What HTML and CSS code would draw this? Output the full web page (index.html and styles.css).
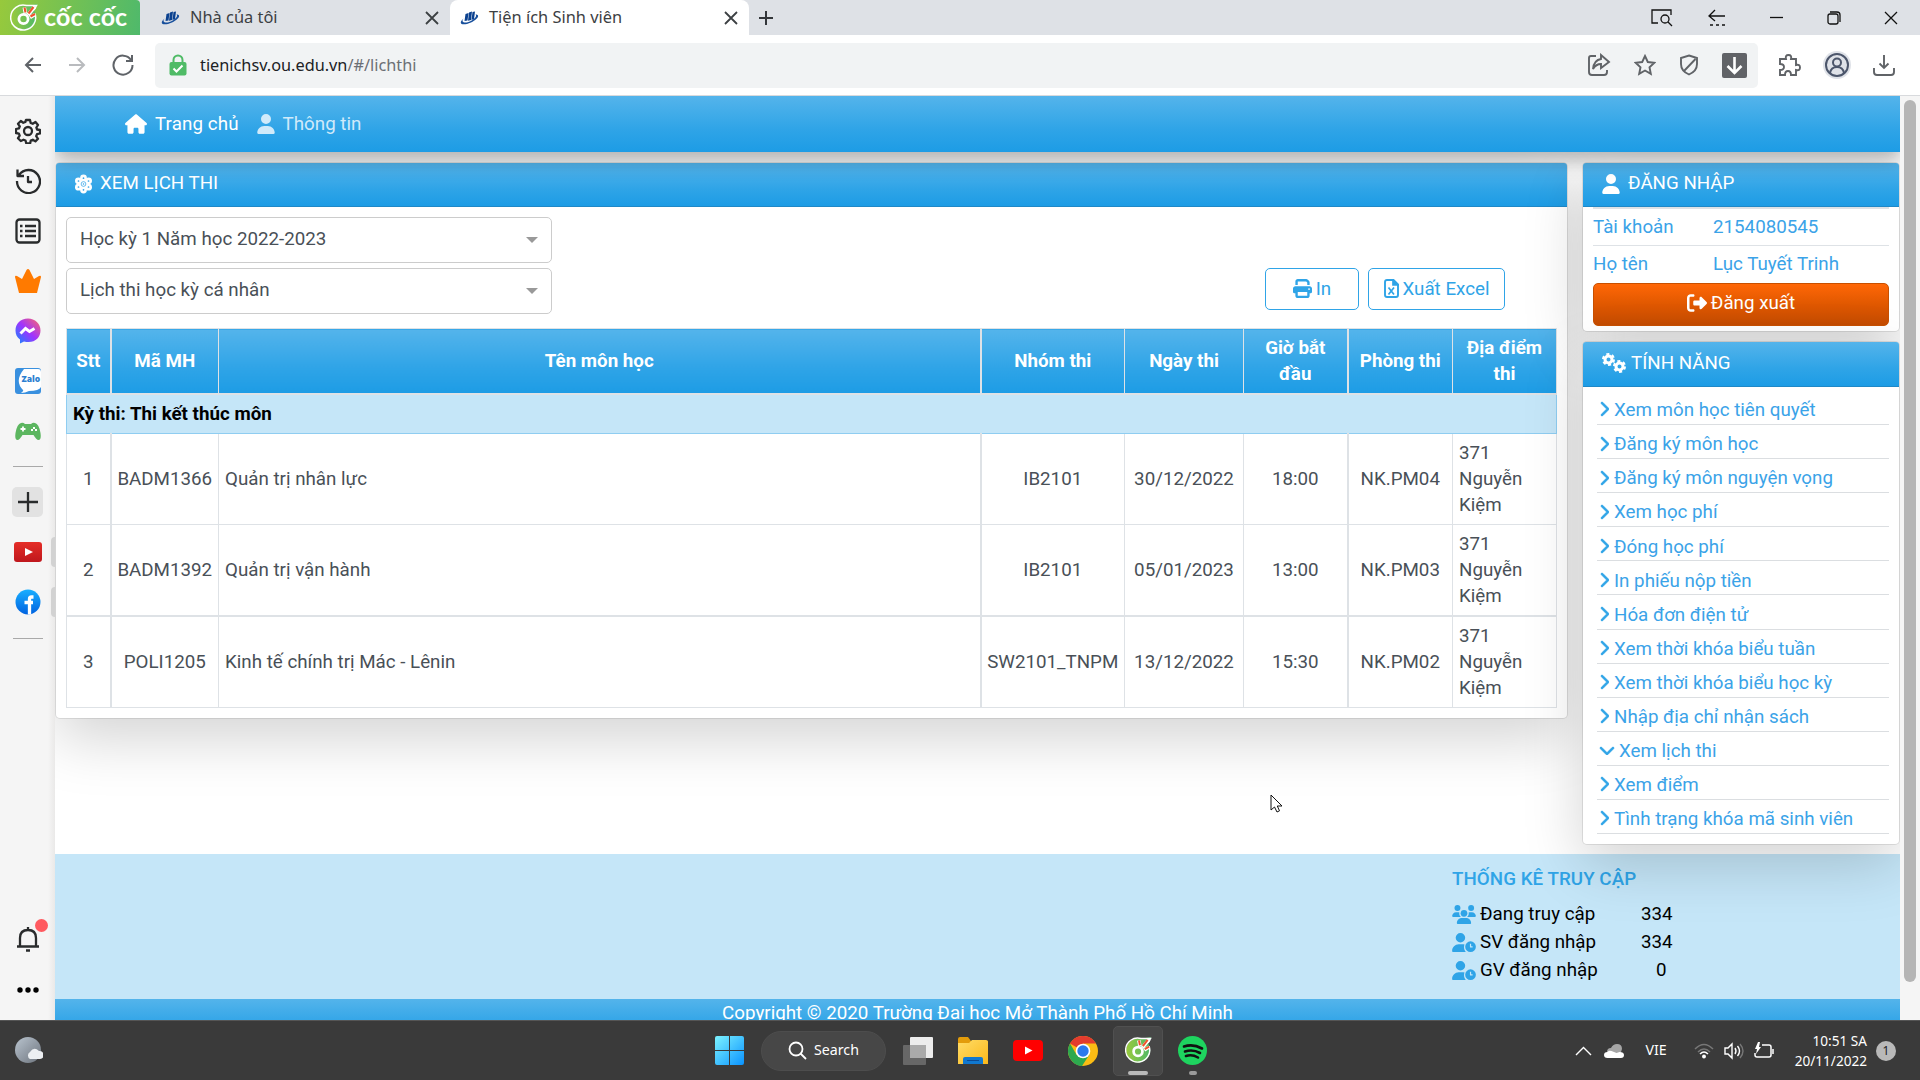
FILE: index.html
```html
<!DOCTYPE html>
<html lang="vi">
<head>
    <meta charset="utf-8" />
    <title>Tiện ích Sinh viên</title>
    <link rel="stylesheet" href="styles.css">
</head>

<body>
    <!-- shared icons -->
    <svg class="defs" width="0" height="0">
        <defs>
            <linearGradient id="gMes" x1="0" y1="1" x2="1" y2="0">
                <stop offset="0" stop-color="#0a8cff" />
                <stop offset=".5" stop-color="#a033ff" />
                <stop offset="1" stop-color="#ff6968" />
            </linearGradient>
            <linearGradient id="gFb" x1="0" y1="0" x2="0" y2="1">
                <stop offset="0" stop-color="#19afff" />
                <stop offset="1" stop-color="#0062e0" />
            </linearGradient>
            <linearGradient id="gYt" x1="0" y1="0" x2="0" y2="1">
                <stop offset="0" stop-color="#e52d27" />
                <stop offset="1" stop-color="#bf171d" />
            </linearGradient>
            <linearGradient id="gWin" x1="0" y1="0" x2="1" y2="1">
                <stop offset="0" stop-color="#7df3ff" />
                <stop offset="1" stop-color="#0a93ff" />
            </linearGradient>
            <linearGradient id="gFolder" x1="0" y1="0" x2="1" y2="1">
                <stop offset="0" stop-color="#ffdc67" />
                <stop offset="1" stop-color="#fbb81a" />
            </linearGradient>
            <linearGradient id="gMoon" x1="0" y1="0" x2="1" y2="1">
                <stop offset="0" stop-color="#b9c4cf" />
                <stop offset="1" stop-color="#6d747d" />
            </linearGradient>
            <linearGradient id="gCoc" x1="0" y1="0" x2="1" y2="0">
                <stop offset="0" stop-color="#9aca3c" />
                <stop offset="1" stop-color="#4cb86a" />
            </linearGradient>
        </defs>
        <symbol id="chevron" viewBox="0 0 320 512">
            <path d="M310.6 233.4c12.5 12.5 12.5 32.8 0 45.3l-192 192c-12.5 12.5-32.8 12.5-45.3 0s-12.5-32.8 0-45.3L242.7 256 73.4 86.6c-12.5-12.5-12.5-32.8 0-45.3s32.8-12.5 45.3 0l192 192z" />
        </symbol>
        <symbol id="user" viewBox="0 0 448 512">
            <path d="M224 256A128 128 0 1 0 224 0a128 128 0 1 0 0 256zm-45.7 48C79.8 304 0 383.8 0 482.3C0 498.7 13.3 512 29.7 512H418.3c16.4 0 29.7-13.3 29.7-29.7C448 383.8 368.2 304 269.7 304H178.3z" />
        </symbol>
        <symbol id="user-clock" viewBox="0 0 640 512">
            <path d="M224 256A128 128 0 1 0 224 0a128 128 0 1 0 0 256zm-45.700 48C79.800 304 0 383.800 0 482.300C0 498.700 13.300 512 29.700 512H370c-32-36-50-80-50-128c0-26 5-50 14-73c-20-5-42-7-64-7z" />
            <path fill-rule="evenodd" d="M496 224a144 144 0 1 1 0 288a144 144 0 1 1 0-288zM480 288v88c0 8 7 16 16 16h56v-32h-40v-72z" />
        </symbol>
        <symbol id="users" viewBox="0 0 640 512">
            <circle cx="144" cy="80" r="80" />
            <circle cx="512" cy="80" r="80" />
            <circle cx="320" cy="224" r="90" />
            <path d="M0 299c0-59 48-107 107-107h43c16 0 31 3 45 10c-9 44 3 88 41 118H21c-12 0-21-9-21-21zM640 299c0-59-48-107-107-107h-43c-16 0-31 3-45 10c9 44-3 88-41 118h215c12 0 21-9 21-21zM128 485c0-73 60-133 133-133h118c73 0 133 60 133 133c0 15-12 27-27 27H155c-15 0-27-12-27-27z" />
        </symbol>
        <symbol id="favicon" viewBox="0 0 20 20">
            <path d="M6.500 6l3-1-1 7.500-3 .5zM10 4.500l3-1-1 8.500-3 .7zM13.500 4l2.500-.5-1 7.500-2.500 1z" fill="#0b418f" />
            <path d="M4.500 10.500C-1.500 15.500 3 18.500 12 14.500c7-3.500 9.500-8 4.500-8C19.500 9 10 15 5.500 14.500C3 14 3 12.500 4.500 10.500z" fill="#174f9c" />
        </symbol>
        <symbol id="coc" viewBox="0 0 28 28">
            <path d="M25.500 10A12.500 12.500 0 1 1 17 1.900L27 0l-3 6z" fill="url(#gCoc)" />
            <path d="M25 9.500A12.500 12.500 0 1 1 16.500 1.500H26.500L24 6" fill="none" stroke="#fff" stroke-width="1.500" />
            <circle cx="13.500" cy="15" r="4.600" fill="none" stroke="#fff" stroke-width="2.800" />
            <path d="M15.500 9.500l-1.200-6M18 11L25 2.500M20 13.500l5-3" stroke="#fff" stroke-width="3.600" />
            <path d="M15.500 8.500l-1-5M18.500 9.500l5-6.500M20.500 12.500l4.500-2.500" stroke="#f0532d" stroke-width="2.100" />
        </symbol>
    </svg>

    <div class="tab-bar">
        <div class="logo">
            <svg width="28" height="28"><use href="#coc" /></svg>
            <span>cốc cốc</span>
        </div>
        <div class="tab">
            <svg width="20" height="20"><use href="#favicon" /></svg>
            <span>Nhà của tôi</span>
            <svg class="close" width="14" height="14" viewBox="0 0 14 14"><path d="M1 1l12 12M13 1L1 13" /></svg>
        </div>
        <div class="tab tab-active">
            <svg width="20" height="20"><use href="#favicon" /></svg>
            <span>Tiện ích Sinh viên</span>
            <svg class="close" width="14" height="14" viewBox="0 0 14 14"><path d="M1 1l12 12M13 1L1 13" /></svg>
        </div>
        <svg class="plus line" width="16" height="16" viewBox="0 0 16 16"><path d="M8 1v14M1 8h14" /></svg>

        <div class="window-buttons">
            <svg class="line thin" width="24" height="20" viewBox="0 0 24 20"><path d="M8 15H2V2h19v5" /><circle cx="15" cy="11" r="4" /><path d="M18 14l4 4" /></svg>
            <svg class="line thin" width="20" height="20" viewBox="0 0 20 20"><path d="M18 8H3M8 2L2 8l6 5" /><path d="M3 17h16" stroke-dasharray="3 3" /></svg>
            <svg class="line thin" width="14" height="14" viewBox="0 0 14 14"><path d="M0 6.500h13" /></svg>
            <svg class="line thin" width="14" height="14" viewBox="0 0 14 14"><rect x="1" y="3" width="10" height="10" rx="2" /><path d="M3 1h7q3 0 3 3v7" /></svg>
            <svg class="line thin" width="14" height="14" viewBox="0 0 14 14"><path d="M1 1l12 12M13 1L1 13" /></svg>
        </div>
    </div>

    <div class="toolbar">
        <svg class="line grey" width="18" height="18" viewBox="0 0 18 18"><path d="M17 9H2M9 2L2 9l7 7" /></svg>
        <svg class="line light" width="18" height="18" viewBox="0 0 18 18"><path d="M1 9h15M9 2l7 7-7 7" /></svg>
        <svg class="line grey" width="22" height="22" viewBox="0 0 22 22"><path d="M19 6A9.500 9.500 0 1 0 20.500 11M20 1v6h-6" /></svg>

        <div class="address">
            <svg width="18" height="22" viewBox="0 0 18 22">
                <path d="M4.500 9V6a4.500 4.500 0 0 1 9 0v3" fill="none" stroke="#4fbb66" stroke-width="2" />
                <rect x="0.500" y="8" width="17" height="13.500" rx="2" fill="#4fbb66" />
                <path d="M4.500 14.500l3 3 6-6" fill="none" stroke="#fff" stroke-width="2" />
            </svg>
            <p class="url">tienichsv.ou.edu.vn<span>/#/lichthi</span></p>
            <div class="address-icons">
                <svg class="line soft" width="24" height="24" viewBox="0 0 24 24"><path d="M9 3H4q-2 0-2 2v14q0 3 3 3h12q3 0 3-3v-2M14 6V2l8 7-8 6v-4q-5 0-8 5 1-9 8-10z" /></svg>
                <svg class="line soft" width="22" height="22" viewBox="0 0 22 22"><path d="M11 2l2.800 6 6.500.8-4.800 4.500 1.300 6.500L11 16.500 5.200 19.800l1.300-6.500L1.700 8.800l6.500-.8z" /></svg>
                <svg class="line soft" width="20" height="22" viewBox="0 0 20 22"><path d="M10 1.500l8 2.500v6q0 7-8 10.500Q2 17 2 10V4zM16.500 5L5 17" /></svg>
                <svg width="25" height="25" viewBox="0 0 25 25"><rect width="25" height="25" rx="2" fill="#616367" /><path d="M12.500 4v15M5.500 13l7 7 7-7" fill="none" stroke="#fff" stroke-width="2.600" /></svg>
            </div>
        </div>
        <div class="tool-icons">
            <svg class="line soft" width="24" height="24" viewBox="0 0 24 24"><path d="M2 6h6q-1-4 2.500-4T13 6h5v6q4-1 4 2.500T18 17v5h-5q0-4-3-4t-3 4H2v-5q4 0 4-3t-4-3z" /></svg>
            <svg width="28" height="28" viewBox="0 0 28 28"><circle cx="14" cy="14" r="14" fill="#dfe2e8" /><g fill="none" stroke="#4c566b" stroke-width="2"><circle cx="14" cy="14" r="11" /><circle cx="14" cy="11.500" r="4" /><path d="M7 22q1-6 7-6t7 6" /></g></svg>
            <svg class="line soft" width="24" height="22" viewBox="0 0 24 22"><path d="M12 1v13M7.500 9.500L12 14l4.500-4.500M2 14v4q0 3 3 3h14q3 0 3-3v-4" /></svg>
        </div>
    </div>

    <div class="main">
        <div class="side-rail">
            <svg class="line dark" width="26" height="26" viewBox="0 0 26 26"><path d="M11 2h4l.7 3 2 .8L20.500 4l2.500 3-1.600 2.500.7 2 2.900.5v3.500l-3 .7-.8 2 1.800 2.600-2.600 2.600-2.600-1.700-2 .9-.7 2.900h-3.800l-.8-3-2-.8L5.800 23 3 20.200l1.700-2.600-.8-2L1 15v-4l3-.7.8-2L3 5.800 5.800 3l2.500 1.800 2-.8z" /><circle cx="13" cy="13" r="4" /></svg>
            <svg class="line dark" width="26" height="26" viewBox="0 0 26 26"><path d="M4 7a11.500 11.500 0 1 1-2 6M2.500 1.500V8H9M13 8v6h4" /></svg>
            <svg class="line dark" width="26" height="26" viewBox="0 0 26 26"><rect x="1.500" y="1.500" width="23" height="23" rx="3" /><path d="M10 8h11M10 13h11M10 18h11M5 8h2.500M5 13h2.500M5 18h2.500" /></svg>
            <svg width="28" height="26" viewBox="0 0 28 26"><path d="M1 9q0-2 2-1l5 3 4.500-9q1.500-2 3 0l4.500 9 5-3q2-1 2 1l-4 16H5z" fill="#ff7a00" /></svg>
            <svg width="26" height="26" viewBox="0 0 26 26"><path d="M13 .5C5.500.5.500 5.500.5 12.500c0 4 1.500 7 4.500 9V25.500l4-2c10 2.500 16.500-3.500 16.500-11C25.500 5.500 20 .5 13 .5z" fill="url(#gMes)" /><path d="M5.500 15.500l5-5 4 3 5-3" fill="none" stroke="#fff" stroke-width="3" /></svg>
            <svg width="26" height="26" viewBox="0 0 26 26"><rect width="26" height="26" rx="3" fill="#3990df" /><path d="M9 1h14q3 0 3 3v15q-2 4-12 4-4 2-8 2 3-2 2-3-9-9 1-21z" fill="#fff" /><text x="6.500" y="14" class="zalo">Zalo</text></svg>
            <svg width="26" height="18" viewBox="0 0 26 18"><path d="M6 1q2-1 4 1h6q2-2 4-1 4 1 5.500 10 1 7-2 7-2 0-5-5h-11q-3 5-5 5-3 0-2-7Q2 2 6 1z" fill="#5cb660" /><path d="M8 4.500v5M5.500 7h5" stroke="#fff" stroke-width="1.800" /><path d="M18 5h2v2h-2zM16 7h2v2h-2zM20 7h2v2h-2z" fill="#fff" /></svg>
            <hr />
            <div class="add-box"><svg class="line dark" width="20" height="20" viewBox="0 0 20 20"><path d="M10 0v20M0 10h20" /></svg></div>
            <svg width="28" height="20" viewBox="0 0 28 20"><rect width="28" height="20" rx="3" fill="url(#gYt)" /><path d="M11 6l8 4-8 4z" fill="#fff" /></svg>
            <svg width="26" height="26" viewBox="0 0 26 26"><circle cx="13" cy="13" r="12.500" fill="url(#gFb)" /><path d="M18.500 8h-2q-2 0-2 2v15.500M9.500 13.500h8.500" fill="none" stroke="#fff" stroke-width="3.300" /></svg>
            <hr />
            <div class="rail-bottom">
                <svg class="line dark" width="24" height="26" viewBox="0 0 24 26"><path d="M4 20v-8q0-8 8-8t8 8v8M1 20.500h22M12 4V1M10 24.500h4" /></svg>
                <i class="alert-dot"></i>
                <svg width="22" height="6" viewBox="0 0 22 6"><circle cx="3" cy="3" r="2.700" /><circle cx="11" cy="3" r="2.700" /><circle cx="19" cy="3" r="2.700" /></svg>
            </div>
            <i class="handle handle-yt"></i>
            <i class="handle handle-fb"></i>
        </div>

        <div class="page">
            <div class="navbar">
                <a class="active">
                    <svg width="22" height="20" viewBox="0 0 576 512"><path d="M575.8 255.500c0 18-15 32.100-32 32.100h-32l.7 160.200V472c0 22.100-17.900 40-40 40H392c-22.100 0-40-17.900-40-40v-88c0-17.700-14.300-32-32-32h-64c-17.700 0-32 14.300-32 32v88c0 22.100-17.900 40-40 40h-80c-22.100 0-40-17.900-40-40V287.600H32c-18 0-32-14-32-32.100c0-9 3-17 10-24L266.400 8c7-7 15-8 22-8s15 2 21 7L564.800 231.500c8 7 12 15 11 24z" /></svg>
                    Trang chủ
                </a>
                <a><svg width="18" height="20"><use href="#user" /></svg>Thông tin</a>
            </div>

            <div class="content">
                <div class="card schedule">
                    <h2>
                        <svg width="17" height="20" viewBox="0 0 18 20"><g><circle cx="9" cy="3.600" r="3.600" /><circle cx="14.400" cy="6.600" r="3.600" /><circle cx="14.400" cy="13.400" r="3.600" /><circle cx="9" cy="16.400" r="3.600" /><circle cx="3.600" cy="13.400" r="3.600" /><circle cx="3.600" cy="6.600" r="3.600" /><circle cx="9" cy="10" r="4" /></g><circle cx="9" cy="10" r="2.500" fill="none" stroke="#35a5e9" stroke-width=".8" /><g fill="#35a5e9"><circle cx="9" cy="10" r=".8" /><circle cx="9" cy="3.800" r=".9" /><circle cx="14.300" cy="6.800" r=".9" /><circle cx="14.300" cy="13.200" r=".9" /><circle cx="9" cy="16.200" r=".9" /><circle cx="3.700" cy="13.200" r=".9" /><circle cx="3.700" cy="6.800" r=".9" /></g></svg>
                        XEM LỊCH THI
                    </h2>
                    <div class="filters">
                        <div class="selects">
                            <div class="select">Học kỳ 1 Năm học 2022-2023</div>
                            <div class="select">Lịch thi học kỳ cá nhân</div>
                        </div>
                        <div class="buttons">
                            <button class="btn-print">
                                <svg width="19" height="19" viewBox="0 0 512 512"><path d="M128 0C92.700 0 64 28.700 64 64v96h64V64H354.700L384 93.300V160h64V93.300c0-17-6.700-33.300-18.700-45.300L400 18.700C388 6.700 371.700 0 354.700 0H128zM384 352v96H128v-96H384zm64 32h32c17.700 0 32-14.300 32-32V256c0-35.300-28.700-64-64-64H64c-35.300 0-64 28.700-64 64v96c0 17.700 14.300 32 32 32H64v64c0 35.300 28.700 64 64 64H384c35.300 0 64-28.700 64-64V384zM432 248a24 24 0 1 1 0 48 24 24 0 1 1 0-48z" /></svg>
                                In
                            </button>
                            <button class="btn-excel">
                                <svg width="15" height="19" viewBox="0 0 15 19"><path d="M3 1h6.500L14 5.500V16q0 2-2 2H3q-2 0-2-2V3q0-2 2-2z" fill="none" stroke="#2fa4e7" stroke-width="1.900" /><path d="M9 1v5h5zM4.500 8.500l5.500 7M10 8.500l-5.500 7" stroke="#2fa4e7" stroke-width="1.700" /></svg>
                                Xuất Excel
                            </button>
                        </div>
                    </div>
                    <table>
                        <colgroup>
                            <col class="c-stt"><col class="c-code"><col><col class="c-group">
                            <col class="c-date"><col class="c-time"><col class="c-room"><col class="c-place">
                        </colgroup>
                        <tr>
                            <th>Stt</th><th>Mã MH</th><th>Tên môn học</th><th>Nhóm thi</th>
                            <th>Ngày thi</th><th>Giờ bắt đầu</th><th>Phòng thi</th><th>Địa điểm thi</th>
                        </tr>
                        <tr class="group"><td colspan="8">Kỳ thi: Thi kết thúc môn</td></tr>
                        <tr>
                            <td>1</td><td>BADM1366</td><td class="left">Quản trị nhân lực</td><td>IB2101</td>
                            <td>30/12/2022</td><td>18:00</td><td>NK.PM04</td><td class="left">371 Nguyễn Kiệm</td>
                        </tr>
                        <tr>
                            <td>2</td><td>BADM1392</td><td class="left">Quản trị vận hành</td><td>IB2101</td>
                            <td>05/01/2023</td><td>13:00</td><td>NK.PM03</td><td class="left">371 Nguyễn Kiệm</td>
                        </tr>
                        <tr>
                            <td>3</td><td>POLI1205</td><td class="left">Kinh tế chính trị Mác - Lênin</td><td>SW2101_TNPM</td>
                            <td>13/12/2022</td><td>15:30</td><td>NK.PM02</td><td class="left">371 Nguyễn Kiệm</td>
                        </tr>
                    </table>
                </div>

                <div class="right-col">
                    <div class="card login">
                        <h2><svg width="18" height="20"><use href="#user" /></svg>ĐĂNG NHẬP</h2>
                        <div class="account">
                            <p><span>Tài khoản</span>2154080545</p>
                            <p><span>Họ tên</span>Lục Tuyết Trinh</p>
                            <button class="btn-logout">
                                <svg width="20" height="20" viewBox="0 0 512 512"><path d="M377.900 105.900L500.700 228.700c7.200 7.200 11.300 17.100 11.300 27.300s-4.100 20.100-11.300 27.300L377.900 406.100c-6.400 6.400-15 9.900-24 9.900c-18.700 0-33.900-15.200-33.900-33.900l0-62.100-128 0c-17.700 0-32-14.300-32-32l0-64c0-17.700 14.300-32 32-32l128 0 0-62.100c0-18.700 15.200-33.900 33.900-33.900c9 0 17.600 3.600 24 9.900zM160 96L96 96c-17.700 0-32 14.300-32 32l0 256c0 17.700 14.300 32 32 32l64 0c17.700 0 32 14.300 32 32s-14.300 32-32 32l-64 0c-53 0-96-43-96-96L0 128C0 75 43 32 96 32l64 0c17.700 0 32 14.300 32 32s-14.300 32-32 32z" /></svg>
                                Đăng xuất
                            </button>
                        </div>
                    </div>

                    <div class="card features">
                        <h2>
                            <svg width="24" height="20" viewBox="0 0 24 20"><g fill="none" stroke="#fff"><circle cx="6.500" cy="6.500" r="3.500" stroke-width="3" /><circle cx="6.500" cy="6.500" r="5.400" stroke-width="2.200" stroke-dasharray="3 2.650" /><circle cx="17.500" cy="13.500" r="3.500" stroke-width="3" /><circle cx="17.500" cy="13.500" r="5.400" stroke-width="2.200" stroke-dasharray="3 2.650" /></g></svg>
                            TÍNH NĂNG
                        </h2>
                        <ul>
                            <li><svg><use href="#chevron" /></svg>Xem môn học tiên quyết</li>
                            <li><svg><use href="#chevron" /></svg>Đăng ký môn học</li>
                            <li><svg><use href="#chevron" /></svg>Đăng ký môn nguyện vọng</li>
                            <li><svg><use href="#chevron" /></svg>Xem học phí</li>
                            <li><svg><use href="#chevron" /></svg>Đóng học phí</li>
                            <li><svg><use href="#chevron" /></svg>In phiếu nộp tiền</li>
                            <li><svg><use href="#chevron" /></svg>Hóa đơn điện tử</li>
                            <li><svg><use href="#chevron" /></svg>Xem thời khóa biểu tuần</li>
                            <li><svg><use href="#chevron" /></svg>Xem thời khóa biểu học kỳ</li>
                            <li><svg><use href="#chevron" /></svg>Nhập địa chỉ nhận sách</li>
                            <li class="open"><svg><use href="#chevron" /></svg>Xem lịch thi</li>
                            <li><svg><use href="#chevron" /></svg>Xem điểm</li>
                            <li><svg><use href="#chevron" /></svg>Tình trạng khóa mã sinh viên</li>
                        </ul>
                    </div>
                </div>
            </div>

            <div class="footer">
                <h3>THỐNG KÊ TRUY CẬP</h3>
                <p><svg><use href="#users" /></svg><span>Đang truy cập</span><b>334</b></p>
                <p><svg><use href="#user-clock" /></svg><span>SV đăng nhập</span><b>334</b></p>
                <p><svg><use href="#user-clock" /></svg><span>GV đăng nhập</span><b class="zero">0</b></p>
            </div>
            <div class="copyright">Copyright © 2020 Trường Đại học Mở Thành Phố Hồ Chí Minh</div>
        </div>

        <div class="scrollbar"><div class="thumb"></div></div>
    </div>

    <div class="taskbar">
        <svg class="weather" width="28" height="27" viewBox="0 0 28 27"><circle cx="13" cy="13" r="13" fill="url(#gMoon)" /><path d="M15 22a4 4 0 0 1 0-7q4-6 9-1a4 4 0 0 1 1 8z" fill="#eceff2" /></svg>
        <div class="apps">
            <svg width="30" height="30" viewBox="0 0 30 30" fill="url(#gWin)"><path d="M0 2q0-2 2-2h12v14H0zM15 0h12q2 0 2 2v12H15zM0 15h14v14H2q-2 0-2-2zM15 15h14v12q0 2-2 2H15z" /></svg>
            <div class="search">
                <svg width="19" height="19" viewBox="0 0 19 19"><circle cx="8" cy="8" r="6.500" /><path d="M12.500 12.500l5.500 5.500" /></svg>
                Search
            </div>
            <svg width="30" height="28" viewBox="0 0 30 28"><rect x="7" width="23" height="21" rx="1" fill="#ededed" /><rect y="8" width="23" height="20" rx="1" fill="#777" opacity=".75" /><path d="M7 8h16v13H7z" fill="#aaa" /></svg>
            <svg width="30" height="28" viewBox="0 0 30 28"><path d="M0 2q0-2 2-2h8l3 4h17v6H0z" fill="#e39c0b" /><path d="M0 6h11l3-3h14q2 0 2 2v22H0z" fill="url(#gFolder)" /><path d="M5 27v-5q0-2 2-2h16q2 0 2 2v5z" fill="#1178cf" /><path d="M9 23.500h12" stroke="#0b4a94" /></svg>
            <svg width="30" height="21" viewBox="0 0 30 21"><rect width="30" height="21" rx="4" fill="#f00" /><path d="M12 6.500l7.500 4-7.500 4z" fill="#fff" /></svg>
            <svg width="30" height="30" viewBox="0 0 30 30"><circle cx="15" cy="15" r="15" fill="#fbbc14" /><path d="M15 15L2 7.500A15 15 0 0 1 28 7.500H15z" fill="#e33b2e" /><path d="M2 7.500A15 15 0 0 0 14 30l7.500-11.500L15 15l-6.500 3.700z" fill="#2da94f" /><circle cx="15" cy="15" r="7.300" fill="#fff" /><circle cx="15" cy="15" r="5.700" fill="#2b79ee" /></svg>
            <div class="app-active"><svg width="27" height="27"><use href="#coc" /></svg></div>
            <div class="app-open"><svg width="29" height="29" viewBox="0 0 29 29"><circle cx="14.500" cy="14.500" r="14.500" fill="#1ed45f" /><path d="M6 10.500q9-3 18 2M7 15.500q8-2.500 15 1.500M8 20q6-2 12 1.500" fill="none" stroke="#111" stroke-width="2.600" stroke-linecap="round" /></svg></div>
        </div>
        <div class="tray">
            <svg width="17" height="10" viewBox="0 0 17 10"><path d="M1 9l7.500-7.500L16 9" fill="none" stroke="#fff" stroke-width="1.400" /></svg>
            <svg width="20" height="14" viewBox="0 0 20 14"><path d="M3 8q0-4 4-4 2-4 6-4 5 0 5 5l-2 6H3z" fill="#a5a5a5" /><path d="M3.500 14q-3.500 0-3.500-3t3.500-3q1.500-2 4-1l5 2 3-1q4.500 0 4.500 3t-3 3z" fill="#fff" /></svg>
            <span class="lang">VIE</span>
            <svg width="20" height="16" viewBox="0 0 20 16" fill="none" stroke="#fff" stroke-width="1.500"><path d="M1 6q9-9 18 0M4 9q6-6 12 0" stroke="#777" /><path d="M6 11q4-4 8 0" /><circle cx="10" cy="13.500" r="1.200" fill="#fff" /></svg>
            <svg width="20" height="18" viewBox="0 0 20 18" fill="none" stroke="#fff" stroke-width="1.400"><path d="M1 6h3l4-4v14l-4-4H1zM11 6q2 3 0 6M13.500 4q4 5 0 10" /><path d="M16 2q6 7 0 14" stroke="#777" /></svg>
            <svg width="21" height="18" viewBox="0 0 21 18" fill="none" stroke="#fff" stroke-width="1.500"><path d="M8 3h7q2 0 2 2v8q0 2-2 2H3q-2 0-2-2v-2M19 7v5" /><path d="M4 0L1 7h2l-1 5 5-7H5l1-5z" fill="#fff" stroke="none" /></svg>
            <div class="clock">10:51 SA<br />20/11/2022</div>
            <span class="badge">1</span>
        </div>
    </div>

    <svg class="cursor" width="14" height="20" viewBox="0 0 14 20"><path d="M1 1v15l3.500-3 2.500 5 2.500-1.200L7.300 12H12z" fill="#fff" stroke="#111" /></svg>
</body>
</html>
```

FILE: styles.css
```css
* {
    box-sizing: border-box;
    margin: 0px;
    padding: 0px;
}

body {
    width: 1920px;
    height: 1080px;
    overflow: hidden;
    display: flex;
    flex-direction: column;
    position: relative;
    background-color: #fff;
    font-family: Roboto, "Liberation Sans", sans-serif;
    font-size: 18.75px;
    line-height: 26.25px;
    color: #495057;
}

svg {
    flex: none;
}

.defs {
    position: absolute;
}

.line {
    fill: none;
    stroke: #33363a;
    stroke-width: 2;
}

.line.thin {
    stroke: #111;
    stroke-width: 1.3;
}

.line.grey {
    stroke: #5f6368;
}

.line.light {
    stroke: #b9bbbe;
}

.line.soft {
    stroke: #606367;
    stroke-width: 1.9;
}

.line.dark {
    stroke: #292b2c;
    stroke-width: 2.3;
    stroke-linejoin: round;
}

/* browser tabs */
.tab-bar {
    display: flex;
    align-items: center;
    height: 35px;
    background-color: #dee1e6;
    font-family: "Noto Sans", sans-serif;
    font-size: 16.4px;
    color: #3c4043;
}

.logo {
    display: flex;
    align-items: center;
    gap: 6px;
    width: 140px;
    height: 35px;
    padding-left: 10px;
    border-top-right-radius: 4px;
    background: linear-gradient(100deg, #97c93c, #4fb96b);
    color: #fff;
    font-family: Lato, sans-serif;
    font-size: 25px;
    font-weight: bold;
    letter-spacing: 0.1px;
}

.logo span {
    padding-bottom: 2px;
}

.tab {
    display: flex;
    align-items: center;
    gap: 10px;
    width: 310px;
    height: 35px;
    padding: 0px 11px 0px 20px;
}

.tab-active {
    width: 299px;
    padding-left: 9px;
    border-radius: 8px 8px 0px 0px;
    background-color: #fff;
}

.close {
    margin-left: auto;
    stroke: #3c4043;
    stroke-width: 1.8;
}

.plus {
    margin-left: 9px;
}

.window-buttons {
    display: flex;
    align-items: center;
    gap: 43px;
    margin-left: auto;
    padding-right: 22px;
}

.window-buttons svg:first-child {
    margin-right: -10px;
}

/* toolbar */
.toolbar {
    display: flex;
    align-items: center;
    height: 61px;
    padding-left: 24px;
    border-bottom: 1px solid #d8dadd;
    background-color: #fff;
}

.toolbar > svg {
    margin-right: 26px;
}

.toolbar > svg:nth-child(3) {
    margin-right: 21px;
}

.address {
    display: flex;
    align-items: center;
    width: 1603px;
    height: 45px;
    padding: 0px 11px 0px 14px;
    border-radius: 5px;
    background-color: #f1f3f4;
}

.url {
    margin-left: 13px;
    font-family: "Noto Sans", sans-serif;
    font-size: 16.300px;
    color: #202124;
}

.url span {
    color: #6b6f74;
}

.address-icons {
    display: flex;
    align-items: center;
    gap: 23px;
    margin-left: auto;
}

.tool-icons {
    display: flex;
    align-items: center;
    gap: 21px;
    margin-left: 20px;
}

/* side rail */
.main {
    display: flex;
    height: 924px;
}

.side-rail {
    display: flex;
    flex-direction: column;
    align-items: center;
    position: relative;
    width: 55px;
    padding-top: 22px;
    background: linear-gradient(90deg, #f5f5f5 48px, #eae9e8);
}

.side-rail > svg {
    height: 26px;
    margin-bottom: 24px;
}

.side-rail hr {
    width: 30px;
    height: 1px;
    border: none;
    background-color: #a9a9a9;
}

.side-rail > svg:nth-child(7) {
    margin-bottom: 22px;
}

.side-rail > svg:nth-child(11) {
    margin-bottom: 23px;
}

.add-box {
    display: flex;
    align-items: center;
    justify-content: center;
    width: 31px;
    height: 30px;
    margin: 20px 0px 22px;
    border-radius: 5px;
    background-color: #e2e2e2;
}

.zalo {
    font-family: "Open Sans", sans-serif;
    font-size: 8.5px;
    font-weight: 800;
    fill: #2d7fd0;
}

.rail-bottom {
    display: flex;
    flex-direction: column;
    align-items: center;
    gap: 35px;
    position: relative;
    margin-top: auto;
    padding-bottom: 27px;
}

.alert-dot {
    position: absolute;
    top: -7px;
    right: -8px;
    width: 13px;
    height: 13px;
    border-radius: 50%;
    background-color: #ff5a60;
}

.handle {
    position: absolute;
    right: 0px;
    width: 4px;
    height: 30px;
    border-radius: 4px 0px 0px 4px;
    background-color: #d2d2d2;
}

.handle-yt {
    top: 441px;
}

.handle-fb {
    top: 491px;
}

/* page */
.page {
    display: flex;
    flex-direction: column;
    width: 1845px;
    overflow: hidden;
}

.navbar {
    display: flex;
    align-items: center;
    gap: 18px;
    position: relative;
    z-index: 2;
    flex: none;
    height: 56px;
    padding-left: 70px;
    background: linear-gradient(#54b4eb, #2fa4e7 60%, #1d9ce5);
    box-shadow: 0px 10px 20px rgba(0, 0, 0, 0.19), 0px 6px 14px rgba(0, 0, 0, 0.12);
}

.navbar a {
    display: flex;
    align-items: center;
    gap: 8px;
    color: #d0eafa;
    fill: #d0eafa;
}

.navbar a.active {
    color: #fff;
    fill: #fff;
    letter-spacing: 0.1px;
}

.content {
    display: flex;
    align-items: flex-start;
    gap: 16px;
    flex: none;
    height: 702px;
    padding: 11px 0px 0px 1px;
}

.card {
    position: relative;
    border-radius: 4px;
    background-color: #fff;
    box-shadow: 0px 20px 60px rgba(0, 0, 0, 0.175), 0px 0px 0px 1px rgba(0, 0, 0, 0.09);
}

.card h2 {
    display: flex;
    align-items: center;
    gap: 8px;
    height: 44px;
    padding: 0px 0px 2px 19px;
    border-bottom: 1px solid #2088c6;
    background: linear-gradient(#54b4eb, #2fa4e7 60%, #1d9ce5);
    border-radius: 3px 3px 0px 0px;
    font-size: 18.75px;
    font-weight: normal;
    color: #fff;
    fill: #fff;
}

.schedule {
    width: 1511px;
    height: 555px;
}

.filters {
    display: flex;
    justify-content: space-between;
    padding: 10px 62px 0px 10px;
}

.select {
    display: flex;
    align-items: center;
    justify-content: space-between;
    width: 486px;
    height: 46px;
    margin-bottom: 5px;
    padding: 0px 13px 1px;
    border: 1px solid #ccc;
    border-radius: 5px;
}

.select::after {
    content: "";
    border: 6px solid transparent;
    border-top-color: #999;
    border-bottom: none;
}

.buttons {
    display: flex;
    gap: 9px;
    padding-top: 51px;
}

button {
    display: flex;
    align-items: center;
    justify-content: center;
    gap: 4px;
    height: 42px;
    padding-bottom: 1px;
    border: 1px solid #2fa4e7;
    border-radius: 5px;
    background-color: #fff;
    font-family: inherit;
    font-size: 18.75px;
    color: #2fa4e7;
    fill: #2fa4e7;
}

.btn-print {
    width: 94px;
}

.btn-excel {
    width: 137px;
}

table {
    width: 1491px;
    margin: 9px 0px 0px 10px;
    border-collapse: collapse;
    table-layout: fixed;
}

.c-stt { width: 44px; }
.c-code { width: 108px; }
.c-group { width: 144px; }
.c-date { width: 119px; }
.c-time { width: 104px; }
.c-room { width: 105px; }
.c-place { width: 104px; }

th, td {
    height: 91.300px;
    padding: 0px 5px;
    border: 1px solid #dee2e6;
    text-align: center;
}

th {
    height: 65px;
    background: linear-gradient(#54b4eb, #2fa4e7 60%, #1d9ce5);
    border-bottom: 2px solid #dee2e6;
    color: #fff;
}

th:nth-child(2), td:nth-child(2),
th:nth-child(4), td:nth-child(4),
th:nth-child(7), td:nth-child(7) {
    border-left-width: 2px;
}

tr:last-child td {
    border-top-width: 2px;
}

td.left {
    padding-left: 6px;
    text-align: left;
}

.group td {
    height: 40px;
    padding-left: 6px;
    border-color: #8fcdf1;
    border-top: none;
    background-color: #c5e6f8;
    text-align: left;
    font-weight: bold;
    color: #000;
}

.right-col {
    display: flex;
    flex-direction: column;
    gap: 11px;
    width: 316px;
}

.login {
    height: 168px;
    color: #3ba3e8;
}

.account {
    margin: 0px 10px;
    border-top: 2px solid #dee2e6;
}

.account p {
    display: flex;
    height: 37px;
    padding-top: 5px;
    border-bottom: 1px solid #dee2e6;
}

.account p + p {
    border: none;
}

.account p span {
    width: 120px;
}

.btn-logout {
    width: 100%;
    height: 43px;
    padding-bottom: 3px;
    border-color: #c85000;
    background: linear-gradient(#ff6707, #e05800 50%, #c44b00);
    color: #fff;
    fill: #fff;
}

.features {
    height: 502px;
}

.features h2 {
    height: 45px;
    gap: 5px;
}

.features ul {
    margin: 4px 10px 0px 14px;
    list-style: none;
}

.features li {
    display: flex;
    align-items: flex-end;
    height: 34.080px;
    padding-bottom: 0.6px;
    padding-left: 2px;
    border-bottom: 1px solid #dbdee1;
    color: #3ba3e8;
    fill: #2fa4e7;
}

.features li svg {
    width: 10px;
    height: 16px;
    margin: 0px 5px 6px 0px;
    stroke: #2fa4e7;
    stroke-width: 20;
}

.features .open svg {
    width: 10px;
    margin: 0px 7px 6px 3px;
    transform: rotate(90deg);
}

/* footer */
.footer {
    flex: none;
    height: 145px;
    padding: 12px 0px 0px 1397px;
    background-color: #c5e6f8;
    color: #000;
}

.footer h3 {
    margin-bottom: 8px;
    font-size: 18.75px;
    font-weight: 500;
    letter-spacing: 0.050px;
    color: #2fa4e7;
}

.footer p {
    display: flex;
    align-items: center;
    height: 28px;
}

.footer svg {
    width: 24px;
    height: 19px;
    margin-right: 4px;
    fill: #2fa4e7;
}

.footer span {
    width: 155px;
}

.footer b {
    width: 41px;
    padding-left: 6px;
    font-weight: normal;
}

.footer b.zero {
    padding-left: 21px;
}

.footer, .copyright {
    position: relative;
    z-index: -1;
}

.copyright {
    flex: none;
    height: 42px;
    padding-top: 1px;
    background: linear-gradient(#54b4eb, #2fa4e7 60%, #1d9ce5);
    text-align: center;
    color: #fff;
}

.scrollbar {
    width: 20px;
    padding: 4px;
    background-color: #f5f5f5;
}

.thumb {
    width: 12px;
    height: 882px;
    border-radius: 6px;
    background-color: #b5b5b5;
}

/* taskbar */
.taskbar {
    display: flex;
    align-items: center;
    height: 60px;
    padding: 0px 24px 0px 15px;
    border-top: 1px solid #555;
    background-color: #3a3a3a;
    font-family: "Noto Sans", sans-serif;
    font-size: 14.200px;
    color: #fff;
}

.apps {
    display: flex;
    align-items: center;
    margin-left: 672px;
    gap: 25px;
}

.search {
    display: flex;
    align-items: center;
    justify-content: center;
    gap: 7px;
    width: 125px;
    height: 40px;
    margin: 0px -8px 0px -9px;
    border: 1px solid #4d4d4d;
    border-radius: 20px;
    background-color: #474747;
}

.search svg {
    fill: none;
    stroke: #fff;
    stroke-width: 1.8;
}

.app-active {
    display: flex;
    align-items: center;
    justify-content: center;
    position: relative;
    width: 50px;
    height: 50px;
    margin: 0px -10px;
    border: 1px solid #505050;
    border-radius: 5px;
    background-color: #474747;
}

.app-open {
    display: flex;
    position: relative;
}

.app-active::after, .app-open::after {
    content: "";
    position: absolute;
    bottom: 0px;
    width: 20px;
    height: 4px;
    border-radius: 2px;
    background-color: #b9b9b9;
}

.app-open::after {
    bottom: -10px;
    left: 11px;
    width: 8px;
    background-color: #9a9a9a;
}

.tray {
    display: flex;
    align-items: center;
    margin-left: auto;
}

.tray svg {
    margin-right: 10px;
}

.tray svg:nth-child(1) {
    margin-right: 12px;
}

.lang {
    margin: 0px 27px 0px 11px;
}

.clock {
    margin: 0px 9px 0px 10px;
    font-size: 13.600px;
    line-height: 20px;
    text-align: right;
}

.badge {
    width: 20px;
    height: 20px;
    border-radius: 50%;
    background-color: #b9b9b9;
    line-height: 20px;
    text-align: center;
    font-size: 12px;
    color: #222;
}

.cursor {
    position: absolute;
    left: 1270px;
    top: 794px;
}
```
